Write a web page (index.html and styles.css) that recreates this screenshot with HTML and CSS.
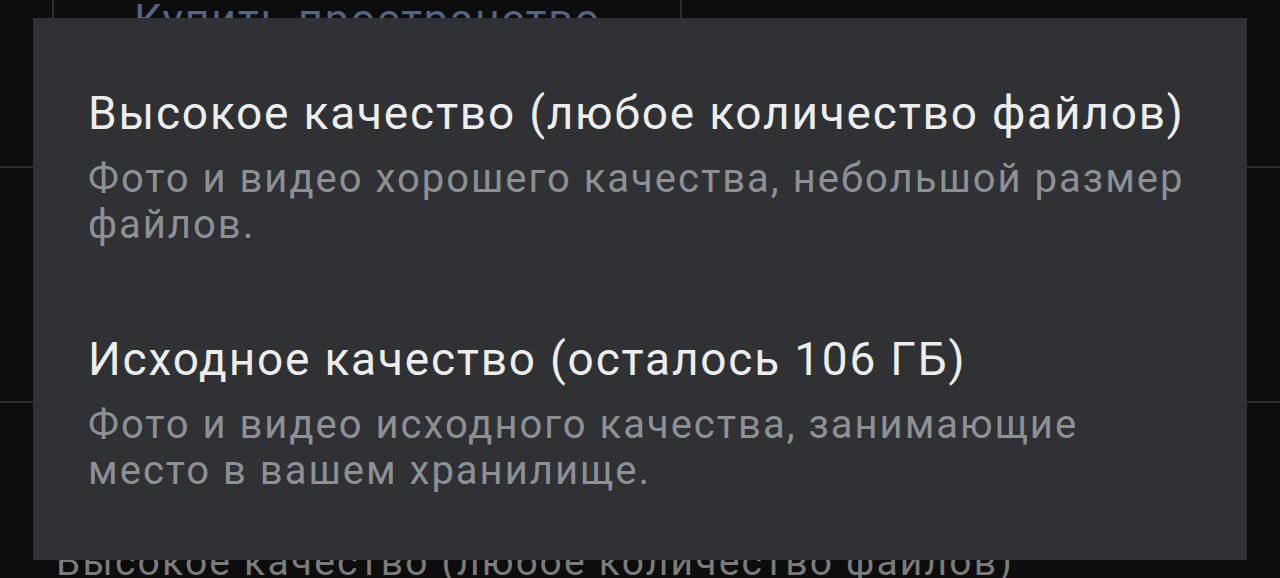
FILE: index.html
```html
<!doctype html>
<html lang="ru">
  <head>
    <meta charset="UTF-8" />
    <meta name="viewport" content="width=device-width, initial-scale=1.0">
    <title>Качество загрузки</title>
    <link rel="stylesheet" href="styles.css">
  </head>
  <body>
    <!-- экран настроек под диалогом -->
    <div class="screen">
      <div class="row row-top">
        <div class="buy-cell">
          <span class="buy-text">Купить пространство</span>
        </div>
      </div>
      <div class="row row-mid"></div>
      <div class="row row-bottom">
        <span class="bg-title">Высокое качество (любое количество файлов)</span>
      </div>
    </div>

    <div class="dialog">
      <div class="option">
        <div class="option-title">Высокое качество (любое количество файлов)</div>
        <div class="option-desc">Фото и видео хорошего качества, небольшой размер файлов.</div>
      </div>
      <div class="option">
        <div class="option-title">Исходное качество (осталось 106 ГБ)</div>
        <div class="option-desc">Фото и видео исходного качества, занимающие место в вашем хранилище.</div>
      </div>
    </div>
  </body>
</html>
```

FILE: styles.css
```css
html,
body {
  height: 100%;
}
body {
  font-family: Roboto, "Noto Sans", sans-serif;
  margin: 0;
  background-color: #0d0d0d;
  overflow: hidden;
}
.screen {
  display: flex;
  flex-direction: column;
}
.row {
  border-bottom: 2px solid #2c2c2c;
}
.row-top {
  height: 166px;
  display: flex;
}
.buy-cell {
  margin-left: 52px;
  width: 630px;
  border-left: 2px solid #2c2c2c;
  border-right: 2px solid #2c2c2c;
  padding-left: 80px;
  box-sizing: border-box;
}
.buy-text {
  display: block;
  font-size: 43px;
  line-height: 48px;
  letter-spacing: 1.8px;
  margin-top: -5px;
  color: #4f6784;
}
.row-mid {
  height: 233px;
}
.row-bottom {
  border-bottom: none;
  padding: 137px 0 0 56px;
}
.bg-title {
  display: block;
  font-size: 39px;
  line-height: 44px;
  letter-spacing: 2.2px;
  color: #7b7b7b;
}
.dialog {
  position: absolute;
  left: 33px;
  top: 18px;
  width: 1214px;
  height: 542px;
  box-sizing: border-box;
  padding: 69px 40px 0 55px;
  background-color: #303134;
}
.option {
  margin-bottom: 85px;
}
.option-title {
  font-size: 46px;
  line-height: 52px;
  letter-spacing: 1.8px;
  color: #ededed;
}
.option-desc {
  margin-top: 17px;
  font-size: 40px;
  line-height: 46px;
  letter-spacing: 2px;
  color: #8d9095;
}
```
